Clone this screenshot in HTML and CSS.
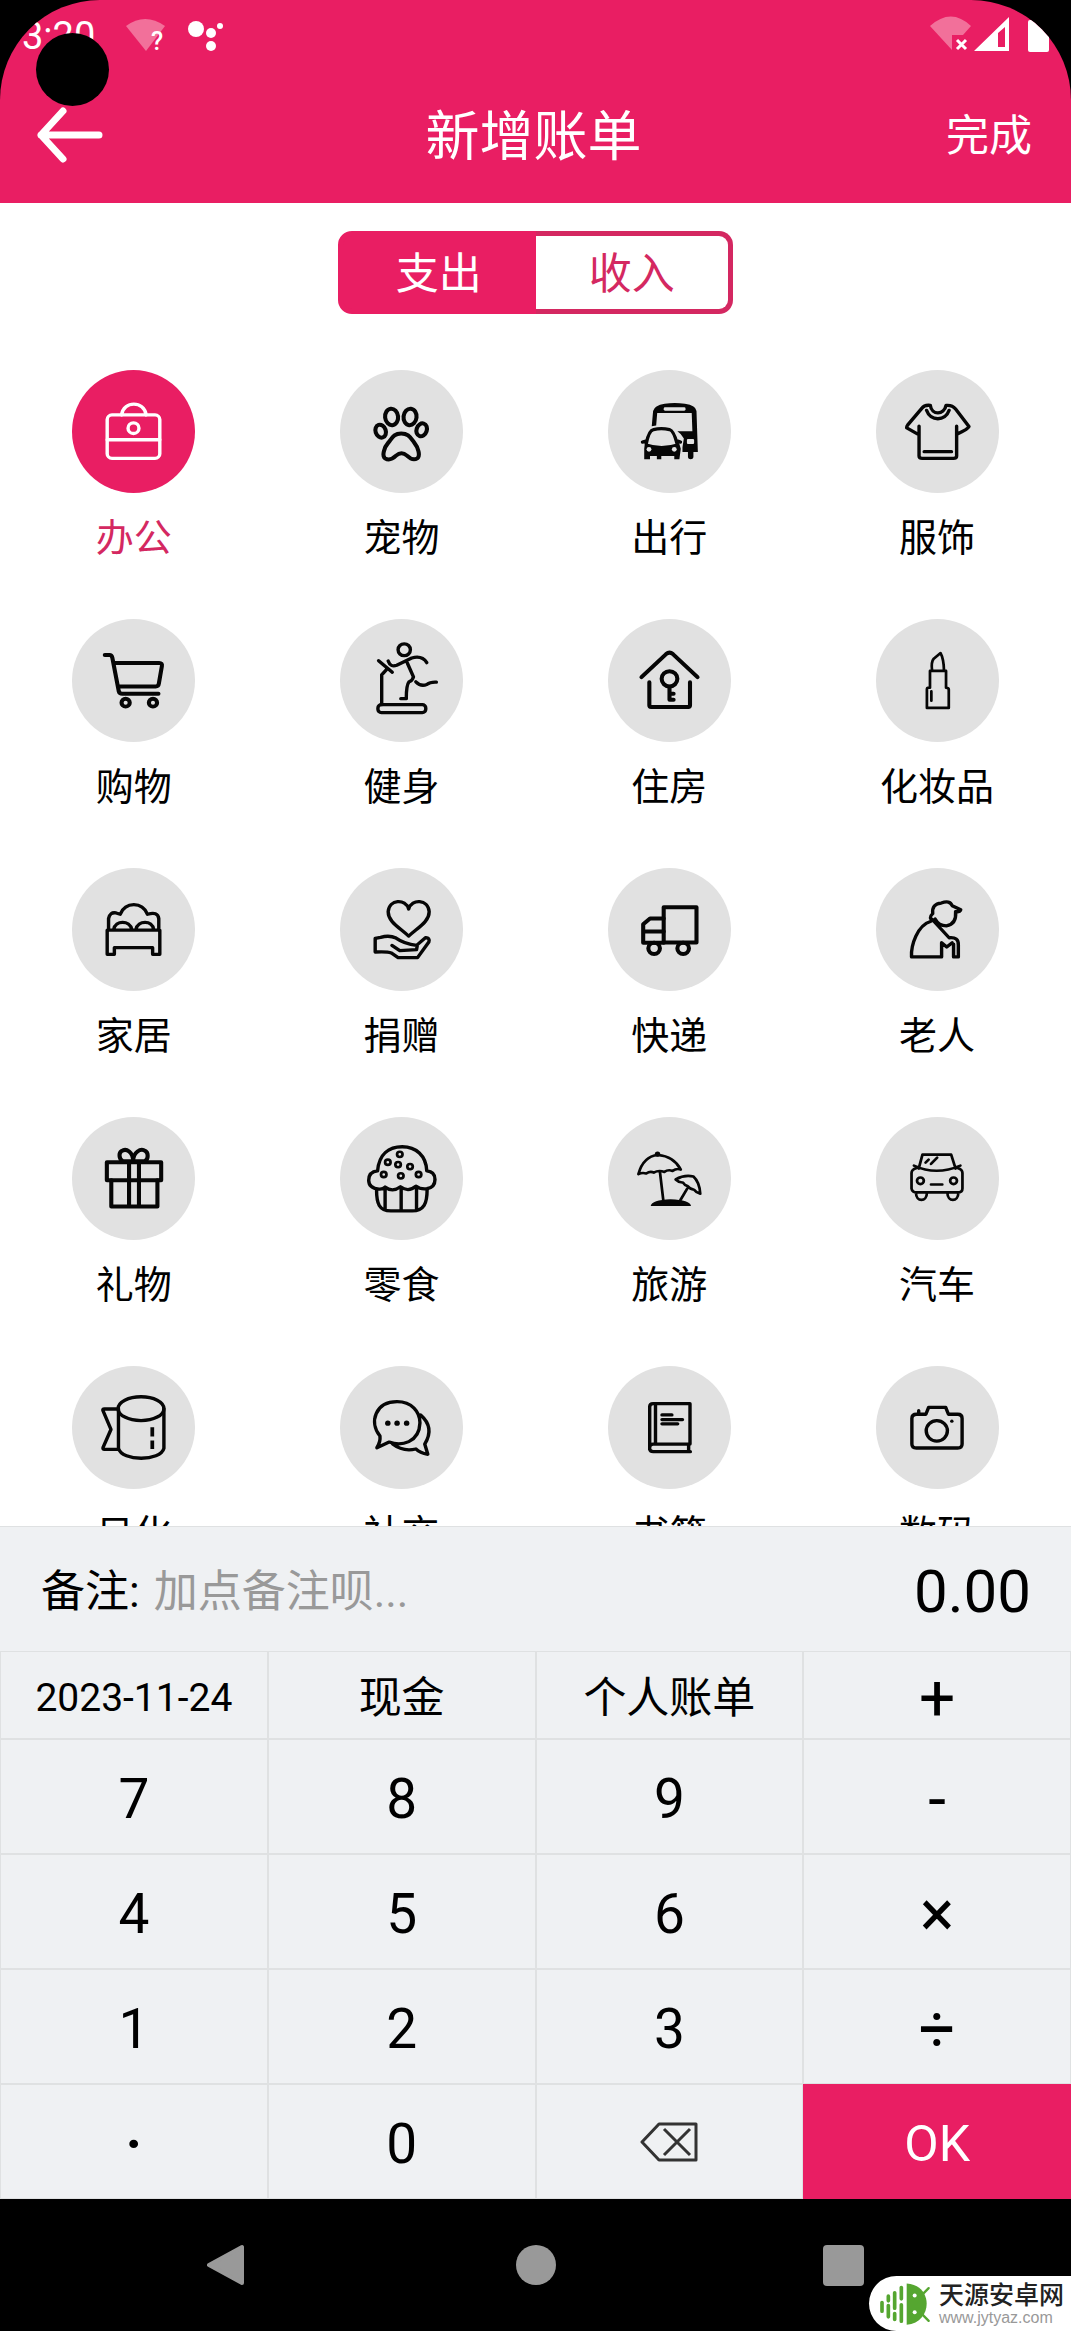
FILE: index.html
```html
<!DOCTYPE html>
<html lang="zh-CN">
<head>
<meta charset="utf-8">
<meta name="viewport" content="width=device-width, initial-scale=1">
<title>新增账单</title>
<link rel="stylesheet" href="styles.css">
</head>
<body>
<div class="app">
  <header class="header">
    <div class="status">
      <span class="time">3:20</span>
      <svg class="status-left" viewBox="124 12 104 40" aria-hidden="true">
        <path class="faint" d="M126 24 Q145 10 165 24 L146 49 Z"/>
        <text class="wifi-mark" x="151" y="48">?</text>
        <circle cx="196" cy="27" r="8"/><circle cx="211" cy="31" r="5"/><circle cx="220" cy="24" r="3"/><circle cx="211" cy="44" r="5"/>
      </svg>
      <svg class="status-right" viewBox="928 12 122 42" aria-hidden="true">
        <path class="faint" d="M930 25 Q951 6 971 25 L963 34 H952 V49 Z"/>
        <path class="cross" d="M957 39 L966 48 M966 39 L957 48"/>
        <path fill-rule="evenodd" d="M974 50 L1009 16 V50 Z M998 32 V46 H1005 V26 Z"/>
        <rect x="1028" y="19" width="21" height="32" rx="2"/>
      </svg>
    </div>
    <div class="toolbar">
      <button class="back" type="button" aria-label="返回">
        <svg viewBox="0 0 70 58" aria-hidden="true"><path d="M28 5 L6 29 L28 53 M6 29 H64"/></svg>
      </button>
      <h1 class="title">新增账单</h1>
      <button class="done" type="button">完成</button>
    </div>
    <span class="camera-hole"></span>
  </header>

  <main class="content">
    <div class="tabs">
      <button class="tab tab-active" type="button">支出</button>
      <button class="tab" type="button">收入</button>
    </div>
    <div class="categories">
      <button class="cat cat-active" type="button">
        <svg class="icon" viewBox="209 58 360 372" preserveAspectRatio="none"><rect x="312" y="194" width="154" height="131" rx="14"/><path d="M354 194 C360 150 420 150 426 194 M312 269 H466"/><circle cx="389" cy="234" r="16"/></svg>
        <span>办公</span></button>
      <button class="cat" type="button">
        <svg class="icon heavy" viewBox="986 58 360 372" preserveAspectRatio="none"><ellipse cx="1137" cy="200" rx="19" ry="25" transform="rotate(-6 1137 200)"/><ellipse cx="1191" cy="200" rx="19" ry="25" transform="rotate(6 1191 200)"/><ellipse cx="1105" cy="243" rx="15" ry="20" transform="rotate(-18 1105 243)"/><ellipse cx="1225" cy="239" rx="15" ry="20" transform="rotate(18 1225 239)"/><path d="M1165 250 C1187 250 1192 263 1203 277 C1215 292 1222 318 1212 325 C1200 333 1190 325 1182 317 C1172 308 1160 308 1150 317 C1142 325 1130 333 1118 325 C1108 318 1115 292 1128 277 C1139 263 1144 250 1165 250Z"/></svg>
        <span>宠物</span></button>
      <button class="cat" type="button">
        <svg class="icon" viewBox="222 58 360 372" preserveAspectRatio="none"><path class="solid" d="M350 228 L354 182 Q357 165 388 160 Q417 156 447 160 Q480 165 481 182 L485 306 H472 V320 Q472 328 464 328 Q456 328 456 320 V306 H440 V292 L444 265 Q436 250 425 243 H469 L467 188 H366 L363 226 Z"/><rect class="hole" x="385" y="171" width="64" height="10" rx="4"/><rect class="hole" x="453" y="267" width="21" height="15" rx="3"/><path d="M334 280 Q342 240 355 238 Q378 233 402 238 Q414 241 424 280 M323 276 L333 273 M434 276 L426 273"/><path class="solid" d="M330 279 Q378 296 430 279 L435 296 L431 328 H416 V318 H378 V328 H365 V318 H345 V328 H328 V296 Z"/><circle class="hole" cx="342" cy="298" r="7"/><circle class="hole" cx="416" cy="298" r="7"/></svg>
        <span>出行</span></button>
      <button class="cat" type="button">
        <svg class="icon" viewBox="999 58 360 372" preserveAspectRatio="none"><path d="M1158 165 C1162 195 1198 195 1204 165 Q1222 163 1232 176 L1271 229 Q1268 236 1240 250 M1235 228 V318 Q1235 325 1226 325 H1134 Q1125 325 1125 318 V228 M1120 251 L1089 233 Q1088 230 1092 224 L1133 174 Q1140 163 1158 165 M1147 180 C1158 214 1202 214 1213 180 M1140 305 H1220"/></svg>
        <span>服饰</span></button>

      <button class="cat" type="button">
        <svg class="icon heavy" viewBox="209 805 360 372" preserveAspectRatio="none"><path d="M305 914 H319 Q325 914 327 922 L346 1024 Q348 1031 356 1031 H462 M332 938 H464 Q474 938 472 948 L463 1001 Q462 1009 454 1009 H345"/><circle cx="366" cy="1058" r="12"/><circle cx="446" cy="1058" r="12"/></svg>
        <span>购物</span></button>
      <button class="cat" type="button">
        <svg class="icon" viewBox="986 805 360 372" preserveAspectRatio="none"><circle cx="1174" cy="898" r="18"/><rect x="1097" y="1064" width="140" height="24" rx="10"/><path d="M1108 1064 V974 L1122 958 M1099 931 L1139 966 M1127 932 Q1134 952 1152 945 L1196 923 Q1226 914 1240 937 M1183 938 L1201 980 Q1198 992 1188 995 Q1180 1005 1180 1046 H1164 M1208 995 Q1222 1010 1240 1003 Q1250 995 1268 996"/></svg>
        <span>健身</span></button>
      <button class="cat" type="button">
        <svg class="icon heavy" viewBox="222 805 360 372" preserveAspectRatio="none"><path d="M320 981 L392 911 Q402 902 412 911 L484 981 M343 996 V1066 Q343 1071 348 1071 H457 Q462 1071 462 1066 V996 M402 1010 V1049 H414 M404 1031 H414"/><circle cx="402" cy="986" r="23"/></svg>
        <span>住房</span></button>
      <button class="cat" type="button">
        <svg class="icon thin" viewBox="999 805 360 372" preserveAspectRatio="none"><path d="M1163 960 Q1160 935 1168 925 L1188 908 Q1197 925 1198 960 M1157 1012 V962 H1204 V1012 M1157 1013 H1151 Q1148 1013 1148 1018 V1074 H1212 V1018 Q1212 1013 1204 1013 M1161 1024 V1052"/></svg>
        <span>化妆品</span></button>

      <button class="cat" type="button">
        <svg class="icon" viewBox="209 52 360 372" preserveAspectRatio="none"><path d="M316 240 V205 Q320 184 338 188 L350 192 Q362 163 390 163 Q418 163 430 192 Q460 182 463 205 V240 M331 238 C336 209 378 209 384 238 M396 238 C402 209 444 209 448 238 M312 240 H466 V313 H445 V293 H333 V313 H312 Z"/></svg>
        <span>家居</span></button>
      <button class="cat" type="button">
        <svg class="icon" viewBox="986 52 360 372" preserveAspectRatio="none"><path d="M1187 258 C1160 232 1127 215 1127 184 C1130 146 1178 144 1187 176 C1196 144 1244 146 1247 184 C1247 215 1214 232 1187 258Z M1089 306 V265 L1105 262 Q1130 254 1150 264 Q1175 282 1210 286 L1236 263 Q1250 262 1246 276 L1213 323 H1156 L1136 309 Q1125 304 1089 306Z M1138 286 L1161 302 L1210 299 L1212 288"/></svg>
        <span>捐赠</span></button>
      <button class="cat" type="button">
        <svg class="icon heavy" viewBox="222 52 360 372" preserveAspectRatio="none"><rect x="385" y="171" width="96" height="106"/><path d="M385 205 H345 L325 222 V278 H385 M325 244 H385"/><circle cx="357" cy="295" r="17"/><circle cx="442" cy="295" r="17"/></svg>
        <span>快递</span></button>
      <button class="cat" type="button">
        <svg class="icon" viewBox="999 52 360 372" preserveAspectRatio="none"><path d="M1160 213 C1120 225 1101 285 1103 321 H1191 V278 L1206 291 L1222 278 M1163 207 L1213 263 Q1241 260 1240 285 V321 H1226 V282 M1168 212 Q1150 204 1165 190 Q1162 160 1190 158 Q1215 148 1222 166 L1247 178 Q1244 186 1232 184 Q1235 222 1205 227 Q1182 226 1172 206"/></svg>
        <span>老人</span></button>

      <button class="cat" type="button">
        <svg class="icon heavy" viewBox="209 799 360 372" preserveAspectRatio="none"><rect x="311" y="936" width="159" height="54"/><path d="M324 990 V1070 H459 V990 M376 936 V1070 M405 936 V1070 M384 933 H358 C345 926 346 907 354 902 C368 892 388 905 388 933 C388 905 410 892 424 902 C432 907 434 926 422 933 H392"/></svg>
        <span>礼物</span></button>
      <button class="cat" type="button">
        <svg class="icon" viewBox="986 799 360 372" preserveAspectRatio="none"><path d="M1096 962 C1100 910 1130 889 1168 889 C1208 889 1238 915 1240 962 Q1264 964 1264 988 Q1264 1012 1240 1016 Q1220 1018 1209 1008 Q1186 1028 1163 1010 Q1140 1028 1118 1011 Q1112 1018 1100 1017 Q1070 1014 1070 990 Q1070 965 1096 962 M1093 1020 C1093 1060 1100 1083 1135 1083 H1197 C1232 1083 1241 1060 1241 1018 M1118 1012 V1078 M1165 1012 V1083 M1210 1012 V1078"/><g class="thin"><circle cx="1161" cy="912" r="8"/><circle cx="1126" cy="936" r="8"/><circle cx="1156" cy="943" r="8"/><circle cx="1191" cy="949" r="8"/><circle cx="1114" cy="973" r="8"/><circle cx="1164" cy="977" r="8"/><circle cx="1216" cy="973" r="8"/></g></svg>
        <span>零食</span></button>
      <button class="cat" type="button">
        <svg class="icon thin" viewBox="222 799 360 372" preserveAspectRatio="none"><path d="M311 972 Q325 918 368 914 Q415 918 435 958 Q423 953 411 962 Q398 957 387 965 Q370 959 356 967 Q345 962 334 970 Q322 966 311 972Z M374 965 L384 1052 M420 988 Q445 973 472 979 Q490 996 492 1031 Q480 1028 474 1019 Q462 1018 455 1008 Q446 1006 441 997 Q430 998 420 988Z M456 1012 L434 1050"/><circle cx="367" cy="911" r="4"/><path class="solid" d="M347 1068 Q350 1050 405 1048 Q462 1050 465 1068Z"/></svg>
        <span>旅游</span></button>
      <button class="cat" type="button">
        <svg class="icon thin" viewBox="999 799 360 372" preserveAspectRatio="none"><path d="M1124 955 L1135 913 H1219 L1232 955 M1110 946 Q1175 977 1246 946 M1118 953 Q1103 958 1103 968 V1015 Q1105 1027 1118 1027 H1238 Q1252 1027 1252 1015 V968 Q1252 958 1238 953 M1160 1003 H1193 M1144 937 L1153 928 M1160 941 L1178 922 M1116 1028 C1116 1057 1148 1057 1148 1028 M1208 1028 C1208 1057 1240 1057 1240 1028"/><circle cx="1129" cy="992" r="10"/><circle cx="1226" cy="992" r="10"/></svg>
        <span>汽车</span></button>

      <button class="cat" type="button">
        <svg class="icon" viewBox="209 76 360 372" preserveAspectRatio="none"><ellipse cx="411" cy="205" rx="67" ry="36"/><path d="M345 205 V325 C355 365 468 365 478 325 V205 M345 206 H304 Q297 206 300 212 L323 268 L300 322 Q298 328 304 328 H345"/><path class="butt" d="M444 261 V289 M444 301 V327"/></svg>
        <span>日化</span></button>
      <button class="cat" type="button">
        <svg class="icon" viewBox="986 76 360 372" preserveAspectRatio="none"><path d="M1103 288 C1070 245 1090 184 1153 184 C1196 184 1220 215 1220 248 C1218 308 1165 320 1130 306 L1094 323 Q1105 305 1103 288Z M1222 224 Q1264 262 1234 312 L1243 343 Q1220 340 1208 327 Q1170 336 1140 312"/><g class="solid"><circle cx="1126" cy="249" r="8"/><circle cx="1153" cy="249" r="8"/><circle cx="1181" cy="249" r="8"/></g></svg>
        <span>社交</span></button>
      <button class="cat" type="button">
        <svg class="icon" viewBox="222 76 360 372" preserveAspectRatio="none"><path d="M344 322 V200 Q344 190 354 190 H462 V312 H354 Q344 312 344 322 V328 Q346 335 354 335 H463 M361 190 V312 M458 312 V335 M380 224 H409 M380 238 H440 M380 251 H426"/></svg>
        <span>书籍</span></button>
      <button class="cat" type="button">
        <svg class="icon" viewBox="999 76 360 372" preserveAspectRatio="none"><path d="M1118 222 H1145 L1153 201 H1203 L1211 222 H1238 Q1251 222 1251 235 V312 Q1251 324 1238 324 H1117 Q1104 324 1104 312 V235 Q1104 222 1118 222Z M1124 220 V211"/><circle cx="1177" cy="272" r="31"/><circle class="solid" cx="1221" cy="243" r="5"/></svg>
        <span>数码</span></button>
    </div>
  </main>

  <section class="panel">
    <div class="note">
      <label class="note-label" for="note">备注:</label>
      <input class="note-input" id="note" type="text" placeholder="加点备注呗...">
      <output class="amount">0.00</output>
    </div>
    <div class="keypad">
      <button class="key date" type="button">2023-11-24</button>
      <button class="key word" type="button">现金</button>
      <button class="key word" type="button">个人账单</button>
      <button class="key op" type="button">+</button>
      <button class="key" type="button">7</button>
      <button class="key" type="button">8</button>
      <button class="key" type="button">9</button>
      <button class="key op" type="button">-</button>
      <button class="key" type="button">4</button>
      <button class="key" type="button">5</button>
      <button class="key" type="button">6</button>
      <button class="key op" type="button">×</button>
      <button class="key" type="button">1</button>
      <button class="key" type="button">2</button>
      <button class="key" type="button">3</button>
      <button class="key op" type="button">÷</button>
      <button class="key point" type="button">·</button>
      <button class="key" type="button">0</button>
      <button class="key erase" type="button" aria-label="删除">
        <svg class="backspace" viewBox="0 0 58 40" aria-hidden="true"><path d="M2 20 L19 2 H56 V38 H19 Z M24 7 L50 33 M50 7 L24 33"/></svg>
      </button>
      <button class="key ok" type="button">OK</button>
    </div>
  </section>

  <nav class="navbar">
    <button class="nav-button" type="button" aria-label="后退"><svg viewBox="0 0 42 46"><path d="M2 23 L35 5 V41 Z" stroke="#999" stroke-width="4" stroke-linejoin="round"/></svg></button>
    <button class="nav-button" type="button" aria-label="主页"><svg viewBox="0 0 42 46"><circle cx="21" cy="23" r="20"/></svg></button>
    <button class="nav-button" type="button" aria-label="最近任务"><svg viewBox="0 0 42 46"><rect x="0" y="3" width="41" height="41" rx="4"/></svg></button>
  </nav>

  <div class="badge">
    <svg class="badge-logo" viewBox="0 0 150 120" aria-hidden="true">
      <g stroke-width="11" stroke-linecap="round"><path d="M6 57 V83 M25 38 V52 M25 66 V100 M44 28 V74 M44 90 V108 M64 12 V46 M64 64 V113"/></g>
      <path class="robot" d="M80 0 C160 4 160 116 80 124 Z"/><path stroke-width="7" stroke-linecap="round" d="M126 34 L146 14 M126 92 L146 112"/>
      <circle class="eye" cx="104" cy="36" r="6"/><circle class="eye" cx="104" cy="86" r="6"/>
    </svg>
    <div class="badge-text">
      <span class="badge-name">天源安卓网</span>
      <span class="badge-url">www.jytyaz.com</span>
    </div>
  </div>
</div>
</body>
</html>
```
FILE: styles.css
```css
:root {
  --pink: #e91e63;
  --pink-line: #d42861;
  --panel: #eff1f3;
  --line: #dfe1e2;
}

* {
  box-sizing: border-box;
}

body {
  margin: 0;
  background: #000;
  color: #000;
  font-family: Roboto, "Noto Sans CJK SC", sans-serif;
}

button,
input {
  margin: 0;
  padding: 0;
  border: 0;
  background: none;
  color: inherit;
  font: inherit;
}

svg {
  display: block;
}

.app {
  position: relative;
  display: flex;
  flex-direction: column;
  height: 100vh;
  overflow: hidden;
}

/* header */
.header {
  position: relative;
  flex: none;
  overflow: hidden;
  border-radius: 100px 100px 0 0;
  background: var(--pink);
  color: #fff;
}

.status {
  display: flex;
  align-items: center;
  height: 67px;
  padding: 0 21px 0 22px;
}

.time {
  width: 102px;
  padding-top: 4px;
  font-size: 38px;
  line-height: 40px;
}

.status svg {
  fill: #fff;
}

.status .faint {
  fill: #f2709a;
}

.status-left {
  width: 104px;
  height: 40px;
}

.status-right {
  width: 122px;
  height: 42px;
  margin-left: auto;
}

.wifi-mark {
  font-size: 25px;
  font-weight: 500;
}

.status .cross {
  stroke: #fff;
  stroke-width: 3;
}

.toolbar {
  display: grid;
  grid-template-columns: 1fr auto 1fr;
  align-items: center;
  height: 136px;
  padding: 0 39px 0 35px;
}

.back {
  width: 70px;
}

.back svg {
  width: 70px;
  height: 58px;
  fill: none;
  stroke: #fff;
  stroke-width: 7;
  stroke-linecap: round;
  stroke-linejoin: round;
}

.title {
  margin: 0;
  padding-top: 6px;
  font-size: 54px;
  font-weight: 400;
  line-height: 60px;
}

.done {
  justify-self: end;
  padding-top: 2px;
  font-size: 43px;
  line-height: 60px;
}

.camera-hole {
  position: absolute;
  top: 33px;
  left: 36px;
  width: 73px;
  height: 73px;
  border-radius: 50%;
  background: #000;
}

/* categories */
.content {
  flex: 1;
  min-height: 0;
  overflow-y: auto;
  padding-top: 28px;
  background: #fff;
  scrollbar-width: none;
}

.tabs {
  display: flex;
  width: 395px;
  margin: 0 auto 56px;
}

.tab {
  width: 50%;
  height: 83px;
  padding-top: 2px;
  border: 5px solid var(--pink-line);
  border-left: 0;
  border-radius: 0 14px 14px 0;
  color: var(--pink-line);
  font-size: 43px;
  line-height: 60px;
}

.tab-active {
  padding-left: 4px;
  border: 5px solid var(--pink);
  border-radius: 14px 0 0 14px;
  background: var(--pink);
  color: #fff;
}

.categories {
  display: grid;
  grid-template-columns: repeat(4, 1fr);
  row-gap: 61px;
}

.cat {
  display: flex;
  flex-direction: column;
  align-items: center;
  gap: 25px;
  font-size: 38px;
  line-height: 40px;
}

.icon {
  width: 123px;
  height: 123px;
  border-radius: 50%;
  background: #e1e1e1;
  fill: none;
  stroke: #060606;
  stroke-width: 10;
  stroke-linecap: round;
  stroke-linejoin: round;
}

.heavy {
  stroke-width: 12;
}

.thin {
  stroke-width: 8;
}

.icon .solid {
  fill: #060606;
  stroke: none;
}

.icon .hole {
  fill: #e1e1e1;
  stroke: none;
}

.icon .butt {
  stroke-width: 11;
  stroke-linecap: butt;
}

.cat-active {
  color: var(--pink-line);
}

.cat-active .icon {
  background: var(--pink);
  stroke: #fff;
}

/* entry panel */
.panel {
  flex: none;
  border-top: 1px solid var(--line);
  background: var(--panel);
}

.note {
  display: flex;
  align-items: center;
  height: 124px;
  padding: 5px 40px 0 41px;
}

.note-label {
  margin-right: 14px;
  font-size: 44px;
  line-height: 60px;
}

.note-input {
  flex: 1;
  min-width: 0;
  height: 60px;
  font-size: 44px;
}

.note-input::placeholder {
  color: #999;
}

.amount {
  font-size: 60px;
  line-height: 60px;
}

.keypad {
  display: grid;
  grid-template-columns: repeat(4, 1fr);
  grid-template-rows: 88px;
  grid-auto-rows: 115px;
}

.key {
  display: flex;
  align-items: center;
  justify-content: center;
  padding-top: 5px;
  border: 1px solid var(--line);
  font-size: 55px;
  line-height: 60px;
}

.date {
  font-size: 39px;
}

.word {
  font-size: 43px;
}

.op {
  padding-top: 7px;
  font-size: 64px;
}

.point {
  font-weight: 700;
}

.erase {
  padding-top: 0;
}

.ok {
  border: 0;
  background: var(--pink);
  color: #fff;
  font-size: 50px;
}

.backspace {
  width: 58px;
  height: 40px;
  fill: none;
  stroke: #333;
  stroke-width: 3;
  stroke-linejoin: round;
}

/* system navigation */
.navbar {
  display: flex;
  flex: none;
  align-items: center;
  justify-content: center;
  gap: 266px;
  height: 132px;
  background: #000;
}

.nav-button svg {
  width: 42px;
  height: 46px;
  fill: #999;
}

/* site badge over the corner */
.badge {
  position: absolute;
  right: 0;
  bottom: 0;
  display: flex;
  align-items: center;
  gap: 9px;
  height: 55px;
  padding: 0 7px 0 11px;
  border-radius: 28px 0 0 28px;
  background: #fff;
}

.badge-logo {
  width: 50px;
  height: 41px;
  overflow: visible;
  fill: none;
  stroke: #55a630;
}

.badge-logo .robot {
  fill: #55a630;
  stroke: none;
}

.badge-logo .eye {
  fill: #fff;
  stroke: none;
}

.badge-text {
  display: flex;
  flex-direction: column;
  white-space: nowrap;
}

.badge-name {
  color: #222;
  font-size: 25px;
  font-weight: 500;
  line-height: 28px;
}

.badge-url {
  color: #999;
  font-family: "Liberation Sans", sans-serif;
  font-size: 16px;
  line-height: 16px;
}
```
